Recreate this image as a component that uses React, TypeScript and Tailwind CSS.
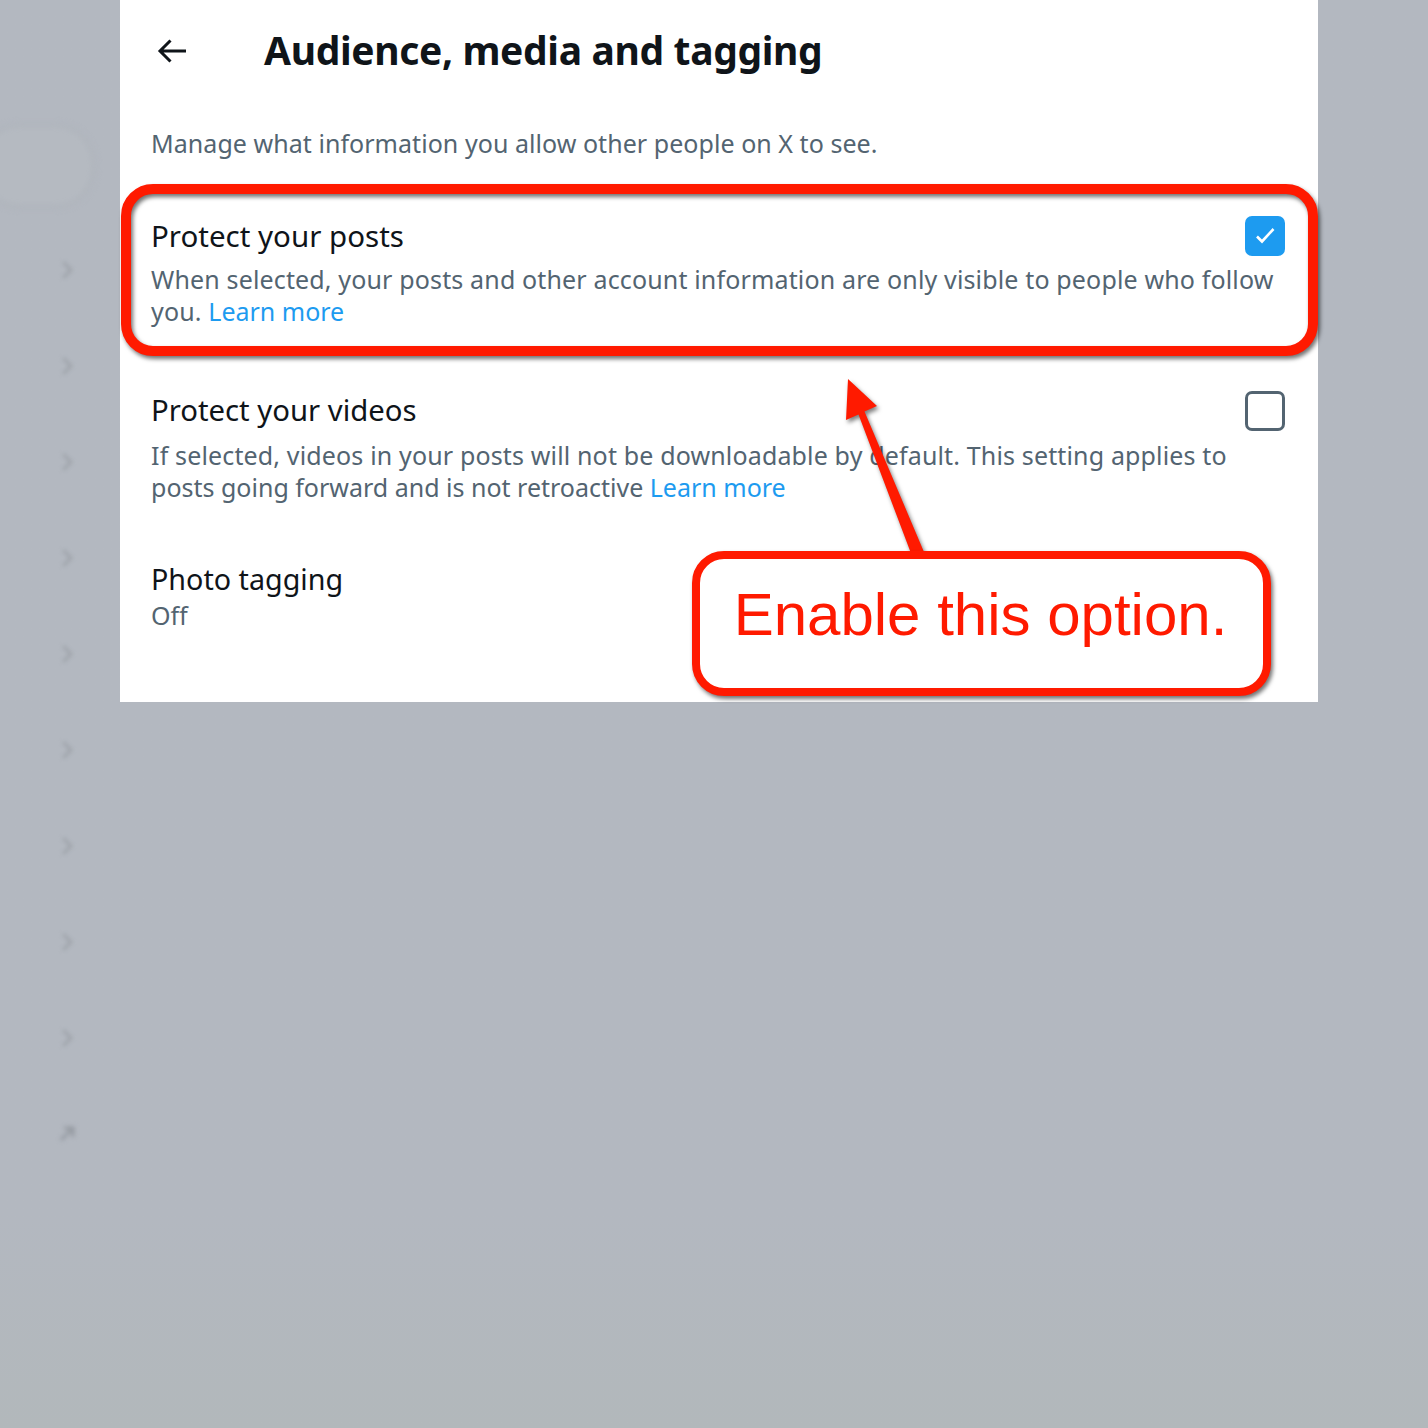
const font = "font-['Noto_Sans',Inter,sans-serif]";

function BackArrow() {
  return (
    <svg width="30" height="26" viewBox="0 0 30 26" fill="none" className="text-[#0f1419]">
      <path d="M29 13H3M13.5 2.5L3 13l10.5 10.5" stroke="currentColor" strokeWidth="3" />
    </svg>
  );
}

function CheckBox({ checked }: { checked: boolean }) {
  if (checked) {
    return (
      <div className="w-[40px] h-[40px] rounded-[7px] bg-[#1d9bf0] flex items-center justify-center shrink-0">
        <svg width="24" height="24" viewBox="0 0 24 24" fill="none">
          <path d="M4 12.5l5 5L20.5 5" stroke="white" strokeWidth="2.6" />
        </svg>
      </div>
    );
  }
  return <div className="w-[40px] h-[40px] rounded-[7px] border-[3px] border-[#536471] shrink-0" />;
}

function Chevron() {
  return (
    <svg width="24" height="24" viewBox="0 0 24 24" className="text-[#536471]">
      <path d="M14.586 12L7.543 4.96l1.414-1.42L17.414 12l-8.457 8.46-1.414-1.42L14.586 12z" fill="currentColor" />
    </svg>
  );
}

// blurred settings list behind the sheet
function SideList() {
  const rows = [0, 1, 2, 3, 4, 5, 6, 7, 8];
  return (
    <div className="w-[120px] shrink-0 relative">
      <div className="absolute left-[-20px] top-[124px] w-[115px] h-[84px] rounded-[40px] border-[3px] border-[#aeb3ba] bg-[#b5bac1] blur-[3px]" />
      <div className="flex flex-col items-center pl-[14px] pt-[258px] gap-[72px] blur-[2px]">
        {rows.map((r) => (
          <svg key={r} width="24" height="24" viewBox="0 0 24 24" className="text-[#959aa1]">
            <path d="M14.586 12L7.543 4.96l1.414-1.42L17.414 12l-8.457 8.46-1.414-1.42L14.586 12z" fill="currentColor" />
          </svg>
        ))}
        <svg width="24" height="24" viewBox="0 0 24 24" className="text-[#959aa1]">
          <path d="M6 18L18 6M9 6h9v9" stroke="currentColor" strokeWidth="3" fill="none" />
        </svg>
      </div>
    </div>
  );
}

export default function App() {
  return (
    <div className={`w-[1428px] h-[1428px] relative overflow-hidden flex bg-gradient-to-b from-[#b3b8c0] from-85% to-[#b2b8bb] ${font}`}>
      <SideList />

      <div className="w-[1198px] h-[702px] bg-white shrink-0 flex flex-col pl-[31px] pr-[33px]">
        <header className="h-[100px] flex items-center">
          <div className="ml-[6px] mt-[2px] flex">
            <BackArrow />
          </div>
          <h1 className="ml-[77px] text-[39px] leading-[48px] font-bold text-[#0f1419] tracking-[-0.35px]">
            Audience, media and tagging
          </h1>
        </header>

        <p className="mt-[27px] text-[25px] leading-[32px] tracking-[0.05px] text-[#536471]">
          Manage what information you allow other people on X to see.
        </p>

        <section className="mt-[57px]">
          <div className="flex items-center justify-between h-[40px]">
            <h2 className="text-[29.5px] text-[#0f1419]">Protect your posts</h2>
            <CheckBox checked />
          </div>
          <p className="mt-[7px] text-[25px] leading-[32px] tracking-[0.15px] text-[#536471] whitespace-nowrap">
            When selected, your posts and other account information are only visible to people who follow
            <br />
            you. <span className="text-[#1d9bf0] tracking-normal">Learn more</span>
          </p>
        </section>

        <section className="mt-[64px]">
          <div className="flex items-center justify-between h-[40px]">
            <h2 className="text-[29.3px] text-[#0f1419]">Protect your videos</h2>
            <CheckBox checked={false} />
          </div>
          <p className="mt-[8px] text-[25px] leading-[32px] tracking-[0.15px] text-[#536471] whitespace-nowrap">
            If selected, videos in your posts will not be downloadable by default. This setting applies to
            <br />
            <span className="tracking-normal">
              posts going forward and is not retroactive <span className="text-[#1d9bf0]">Learn more</span>
            </span>
          </p>
        </section>

        <section className="mt-[56px] flex items-center justify-between">
          <div>
            <h2 className="text-[28.7px] leading-[40px] text-[#0f1419]">Photo tagging</h2>
            <p className="text-[25px] leading-[32px] text-[#536471]">Off</p>
          </div>
          <div className="mr-[8px]">
            <Chevron />
          </div>
        </section>
      </div>

      {/* highlight around the first option */}
      <div className="absolute left-[121px] top-[184px] w-[1197px] h-[172px] rounded-[32px] border-[10px] border-[#ff1a00] drop-shadow-[2px_3px_2px_rgba(0,0,0,0.55)]" />

      {/* pointer arrow */}
      <svg
        className="absolute left-0 top-0 drop-shadow-[2px_3px_2px_rgba(0,0,0,0.5)]"
        width="1428"
        height="1428"
        viewBox="0 0 1428 1428"
      >
        <polygon points="848,379 877,406 864.5,411.5 924,552 912,556 858.5,414.5 846,420" fill="#ff1a00" />
      </svg>

      {/* callout */}
      <div className="absolute left-[692px] top-[551px] w-[579px] h-[145px] rounded-[32px] border-[8px] border-[#ff1a00] bg-white drop-shadow-[2px_3px_2px_rgba(0,0,0,0.55)] flex items-center justify-center">
        <span className="font-['Liberation_Sans',Arial,sans-serif] text-[60px] leading-none text-[#ff1a00] -mt-[18px] mr-[2px]">
          Enable this option.
        </span>
      </div>
    </div>
  );
}
